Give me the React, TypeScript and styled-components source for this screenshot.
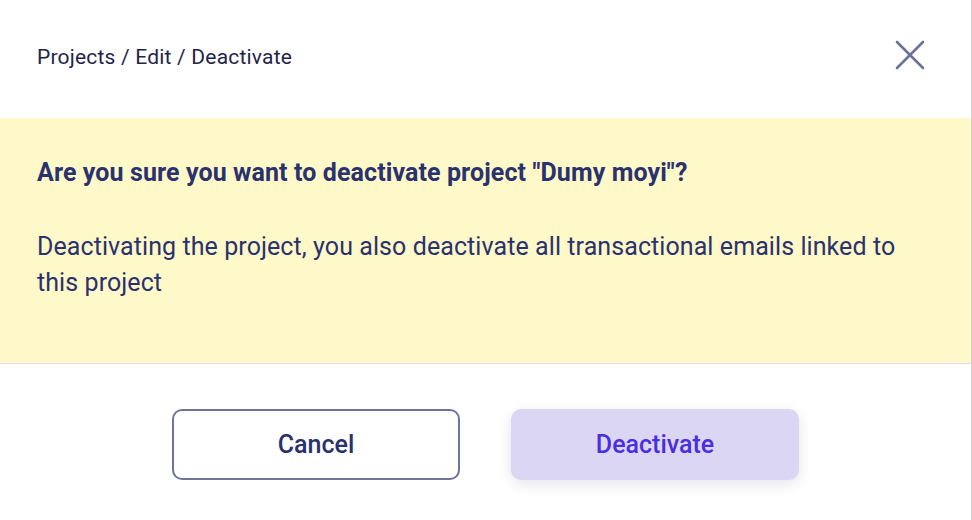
import React from "react";
import styled, { createGlobalStyle } from "styled-components";

const GlobalStyle = createGlobalStyle`
  html, body {
    margin: 0;
    padding: 0;
    background: #ffffff;
    font-family: Roboto, "Liberation Sans", Arial, sans-serif;
  }
`;

const Dialog = styled.div`
  width: 971px;
  height: 520px;
  border-right: 1px solid #d3d3d6;
  background: #ffffff;
  display: flex;
  flex-direction: column;
`;

const Header = styled.header`
  height: 118px;
  display: flex;
  align-items: center;
  justify-content: space-between;
  padding: 0 45px 0 37px;
  box-sizing: border-box;
`;

const Breadcrumb = styled.nav`
  font-size: 21px;
  letter-spacing: 0.2px;
  color: #1f2548;
  margin-top: -4px;
`;

const CloseButton = styled.button`
  border: none;
  background: none;
  padding: 0;
  width: 32px;
  height: 32px;
  display: flex;
  align-items: center;
  justify-content: center;
  cursor: pointer;
  margin-top: -8px;
`;

const Warning = styled.section`
  background: #fff8c9;
  height: 246px;
  border-bottom: 1px solid #dcd9f2;
  padding: 40px 37px 0;
  box-sizing: border-box;
  color: #29326c;

  > h2 {
    font-size: 25px;
    font-weight: bold;
    letter-spacing: 0.1px;
    margin: 0 0 41px;
    line-height: 30px;
  }

  > p {
    font-size: 25px;
    letter-spacing: 0.08px;
    line-height: 36px;
    margin: 0;
    max-width: 890px;
  }
`;

const Actions = styled.div`
  display: flex;
  justify-content: center;
  gap: 51px;
  padding-top: 45px;
`;

const Button = styled.button<{ $primary?: boolean }>`
  width: 288px;
  height: 71px;
  border-radius: 10px;
  font-family: Roboto, "Liberation Sans", Arial, sans-serif;
  font-size: 25px;
  font-weight: 500;
  cursor: pointer;
  box-sizing: border-box;
  border: ${(p) => (p.$primary ? "none" : "2px solid #6e749c")};
  background: ${(p) => (p.$primary ? "#dbd6f3" : "#ffffff")};
  color: ${(p) => (p.$primary ? "#4a2ee0" : "#29326c")};
  box-shadow: ${(p) => (p.$primary ? "0 4px 14px rgba(40, 40, 80, 0.12)" : "none")};
`;

const App = () => {
  return (
    <>
      <GlobalStyle />
      <Dialog>
        <Header>
          <Breadcrumb>Projects / Edit / Deactivate</Breadcrumb>
          <CloseButton aria-label="Close">
            <svg width="30" height="30" viewBox="0 0 30 30" fill="none">
              <path d="M2 2L28 28M28 2L2 28" stroke="#6b7199" strokeWidth="2.6" strokeLinecap="round" />
            </svg>
          </CloseButton>
        </Header>
        <Warning>
          <h2>Are you sure you want to deactivate project "Dumy moyi"?</h2>
          <p>Deactivating the project, you also deactivate all transactional emails linked to this project</p>
        </Warning>
        <Actions>
          <Button>Cancel</Button>
          <Button $primary>Deactivate</Button>
        </Actions>
      </Dialog>
    </>
  );
};

export default App;
